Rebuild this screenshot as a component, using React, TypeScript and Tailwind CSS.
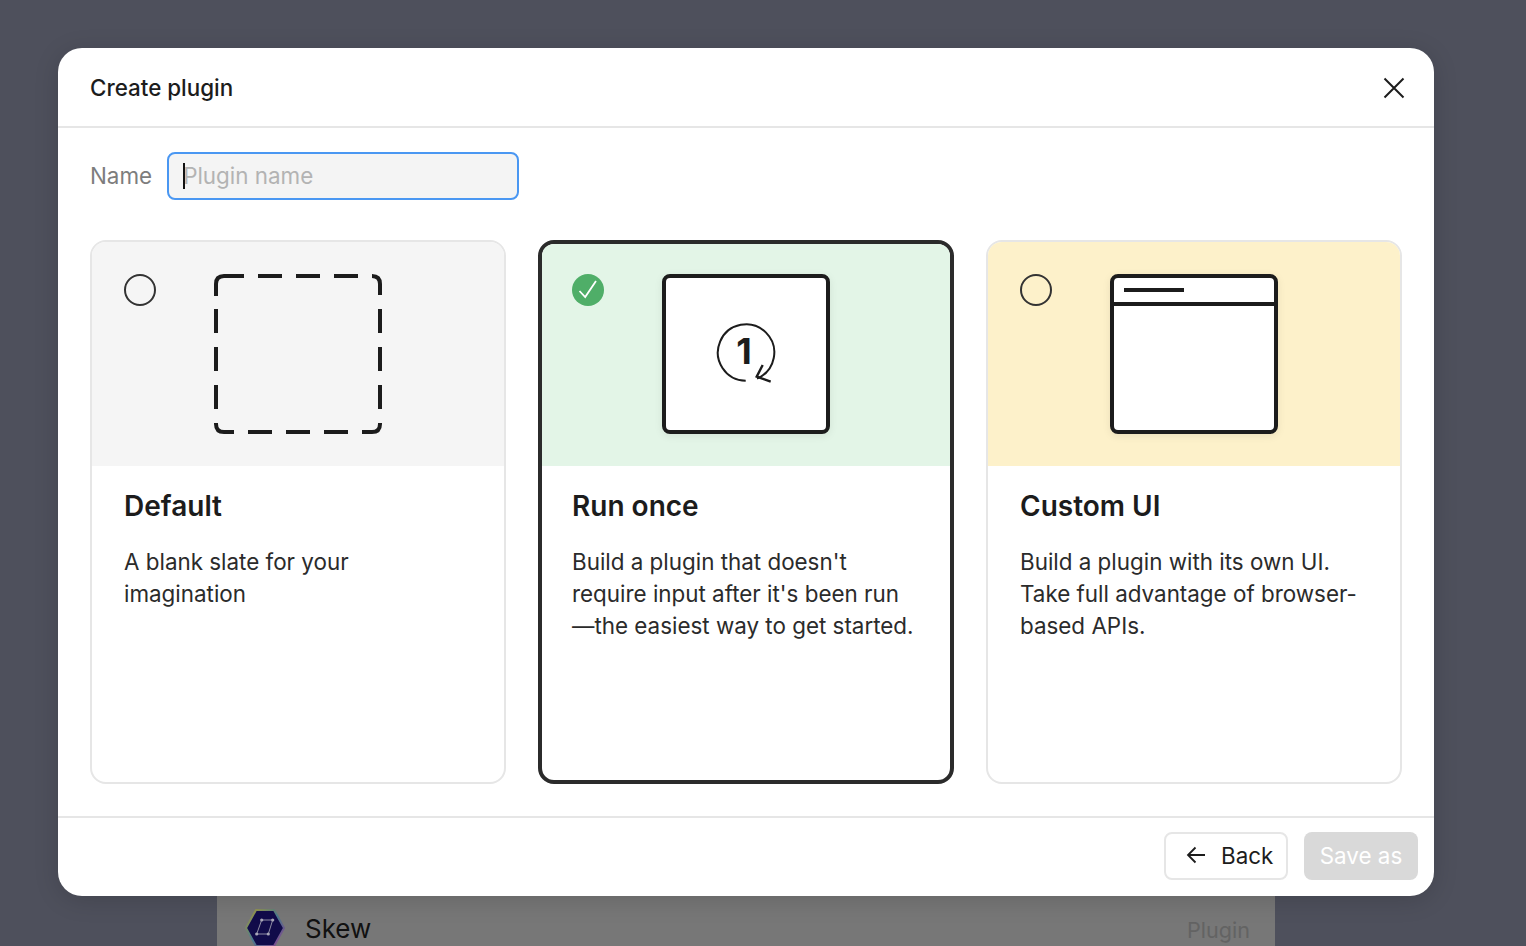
import React from "react";

const inter = { fontFamily: '"Inter", "Liberation Sans", sans-serif' };

function Radio() {
  return <div className="w-8 h-8 rounded-full border-2 border-[#333333] shrink-0" />;
}

function Check() {
  return (
    <svg width="32" height="32" viewBox="0 0 32 32" className="shrink-0">
      <circle cx="16" cy="16" r="16" fill="#4fae68" />
      <path d="M7.5 17 L13.2 23 L24 7" fill="none" stroke="#fff" strokeWidth="1.8" />
    </svg>
  );
}

function Dashed() {
  return (
    <svg width="168" height="160" viewBox="0 0 168 160" className="shrink-0">
      <path
        d="M2 22 V10 Q2 2 10 2 H30 M44 2 H68 M82 2 H106 M120 2 H144 M158 2 Q166 2 166 10 V21 M166 35 V59 M166 73 V97 M166 111 V135 M166 149 V150 Q166 158 158 158 H148 M134 158 H110 M96 158 H72 M58 158 H34 M20 158 H10 Q2 158 2 150 V149 M2 135 V111 M2 97 V73 M2 59 V35"
        fill="none"
        stroke="#1c1c1c"
        strokeWidth="4"
      />
    </svg>
  );
}

function Once() {
  return (
    <div className="w-[168px] h-[160px] rounded-lg border-4 border-[#1c1c1c] bg-white shadow-[0_2px_8px_rgba(0,0,0,0.08)] flex items-center justify-center shrink-0">
      <svg width="64" height="64" viewBox="0 0 64 64">
        <path d="M31.7 58.7 A28.2 28.2 0 1 1 43 56.5" fill="none" stroke="#1c1c1c" strokeWidth="2" />
        <path d="M48.7 43 L42.7 54.7 L56.7 59.7" fill="none" stroke="#1c1c1c" strokeWidth="2.4" />
        <text x="30" y="42" textAnchor="middle" fontSize="36" fontWeight="700" fill="#1c1c1c" style={inter}>1</text>
      </svg>
    </div>
  );
}

function Window() {
  return (
    <div className="w-[168px] h-[160px] rounded-lg border-4 border-[#1c1c1c] bg-white shadow-[0_2px_8px_rgba(0,0,0,0.08)] flex flex-col shrink-0">
      <div className="h-[24px] border-b-4 border-[#1c1c1c] flex items-center pl-[10px] box-content shrink-0">
        <div className="w-[60px] h-1 bg-[#1c1c1c]" />
      </div>
    </div>
  );
}

type CardProps = {
  bg: string;
  selected?: boolean;
  control: React.ReactNode;
  art: React.ReactNode;
  title: string;
  lines: string[];
};

function Card({ bg, selected, control, art, title, lines }: CardProps) {
  return (
    <div
      className={
        selected
          ? "w-[416px] h-[544px] rounded-2xl border-4 border-[#2b2b2b] overflow-hidden flex flex-col"
          : "w-[416px] h-[544px] rounded-2xl border-2 border-[#e6e6e6] overflow-hidden flex flex-col"
      }
    >
      <div
        className={
          selected
            ? `${bg} h-[222px] flex items-start pl-[30px] pt-[30px] gap-[58px] shrink-0`
            : `${bg} h-[224px] flex items-start pl-[32px] pt-[32px] gap-[58px] shrink-0`
        }
      >
        {control}
        {art}
      </div>
      <div className={selected ? "px-[30px] pt-[22px]" : "px-[32px] pt-[22px]"}>
        <h2 className="text-[28px] leading-9 font-semibold text-[#1c1c1c]">{title}</h2>
        <div className="mt-[22px] text-[22.4px] leading-8 text-[#2b2b2b]">
          {lines.map((l) => (
            <div key={l} className="whitespace-nowrap">{l}</div>
          ))}
        </div>
      </div>
    </div>
  );
}

export default function App() {
  return (
    <div className="relative w-full h-[946px] bg-[#4e505c] overflow-hidden" style={inter}>
      <div className="ml-[217px] w-[1058px] pt-[896px]">
        <div className="h-[50px] bg-[#777777] flex items-center pl-[28px] pr-[25px] pt-[14px]">
          <svg width="40" height="40" viewBox="0 0 40 40" className="shrink-0">
            <defs>
              <linearGradient id="hexEdge" x1="0" y1="0" x2="1" y2="1">
                <stop offset="0" stopColor="#a89a3c" />
                <stop offset="0.5" stopColor="#4a7a8c" />
                <stop offset="1" stopColor="#8a3f8f" />
              </linearGradient>
            </defs>
            <path d="M11 2 H29 L39 20 L29 38 H11 L1 20 Z" fill="#110b4a" stroke="url(#hexEdge)" strokeWidth="2" strokeLinejoin="round" />
            <path d="M16.7 12 H27.7 L23.3 26 H11.7 Z" fill="none" stroke="#8f8da3" strokeWidth="1" />
            <circle cx="16.7" cy="12" r="1.6" fill="#a9a7b9" />
            <circle cx="27.7" cy="12" r="1.6" fill="#a9a7b9" />
            <circle cx="23.3" cy="26" r="1.6" fill="#a9a7b9" />
            <circle cx="11.7" cy="26" r="1.6" fill="#a9a7b9" />
          </svg>
          <span className="ml-5 text-[26px] text-[#111111]">Skew</span>
          <span className="ml-auto text-[21.6px] text-[#636363] pt-[4px]">Plugin</span>
        </div>
      </div>

      <div className="absolute left-[58px] top-[48px] w-[1376px] h-[848px] bg-white rounded-[24px] flex flex-col shadow-[0_4px_24px_rgba(0,0,0,0.15)]">
        <div className="h-[80px] border-b-2 border-[#e6e6e6] flex items-center justify-between pl-8 pr-[28px] pt-[2px] shrink-0">
          <span className="text-[22.4px] font-medium text-[#1c1c1c]">Create plugin</span>
          <svg width="24" height="24" viewBox="0 0 24 24">
            <path d="M2.5 2.5 L21.5 21.5 M21.5 2.5 L2.5 21.5" stroke="#1c1c1c" strokeWidth="2" fill="none" />
          </svg>
        </div>
        <div className="flex items-center gap-[15px] pl-8 pt-6 shrink-0">
          <span className="text-[22.4px] text-[#7d7d7d]">Name</span>
          <div className="relative w-[352px] h-12 rounded-lg border-2 border-[#4a97f2] bg-[#f4f4f4] flex items-center pl-[14px]">
            <div className="absolute left-[14px] top-[9px] w-[2px] h-[26px] bg-[#111111]" />
            <span className="text-[22.4px] text-[#b3b3b3]">Plugin name</span>
          </div>
        </div>
        <div className="flex gap-8 px-8 pt-10 shrink-0">
          <Card
            bg="bg-[#f5f5f5]"
            control={<Radio />}
            art={<Dashed />}
            title="Default"
            lines={["A blank slate for your", "imagination"]}
          />
          <Card
            bg="bg-[#e3f5e7]"
            selected
            control={<Check />}
            art={<Once />}
            title="Run once"
            lines={["Build a plugin that doesn't", "require input after it's been run", "—the easiest way to get started."]}
          />
          <Card
            bg="bg-[#fdf1ca]"
            control={<Radio />}
            art={<Window />}
            title="Custom UI"
            lines={["Build a plugin with its own UI.", "Take full advantage of browser-", "based APIs."]}
          />
        </div>
        <div className="mt-8 border-t-2 border-[#e6e6e6] flex-1 flex items-center justify-end gap-4 pr-4 pb-[2px]">
          <div className="w-[124px] h-12 rounded-lg border-2 border-[#e6e6e6] bg-white flex items-center pl-[20px] gap-[15px]">
            <svg width="20" height="20" viewBox="0 0 20 20" className="-mt-[2px]">
              <path d="M19 10 H2 M9.5 2.5 L2 10 L9.5 17.5" stroke="#1c1c1c" strokeWidth="1.8" fill="none" />
            </svg>
            <span className="text-[22.4px] text-[#1c1c1c]">Back</span>
          </div>
          <div className="w-[114px] h-12 rounded-lg bg-[#d9d9d9] flex items-center justify-center">
            <span className="text-[22.4px] text-white">Save as</span>
          </div>
        </div>
      </div>
    </div>
  );
}
